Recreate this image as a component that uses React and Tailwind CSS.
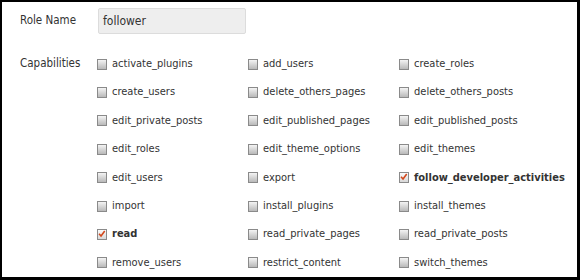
import React from "react";

const caps = [
  ["activate_plugins", false],
  ["add_users", false],
  ["create_roles", false],
  ["create_users", false],
  ["delete_others_pages", false],
  ["delete_others_posts", false],
  ["edit_private_posts", false],
  ["edit_published_pages", false],
  ["edit_published_posts", false],
  ["edit_roles", false],
  ["edit_theme_options", false],
  ["edit_themes", false],
  ["edit_users", false],
  ["export", false],
  ["follow_developer_activities", true],
  ["import", false],
  ["install_plugins", false],
  ["install_themes", false],
  ["read", true],
  ["read_private_pages", false],
  ["read_private_posts", false],
  ["remove_users", false],
  ["restrict_content", false],
  ["switch_themes", false],
];

function Box({ checked }) {
  return (
    <span
      className={`relative w-[10px] h-[11px] shrink-0 border border-[#8a8a8a] bg-gradient-to-b mr-[5px] ${
        checked ? "from-[#fbfbfb] to-[#d8d8d8]" : "from-[#f4f4f4] to-[#b9b9b9]"
      }`}
    >
      {checked && (
        <svg viewBox="0 0 10 10" className="absolute left-0 top-0 w-[8px] h-[8px]">
          <path d="M1.3 4.6 L3.8 7.4 L8.4 1.2" stroke="#d2481c" strokeWidth="2" fill="none" />
        </svg>
      )}
    </span>
  );
}

export default function App() {
  return (
    <div
      className="w-[580px] h-[280px] bg-white border-black border-l-2 border-t-2 border-r-[3px] border-b-[3px] text-[#333] text-[11.5px] overflow-hidden"
      style={{ fontFamily: '"DejaVu Sans Condensed", "DejaVu Sans", sans-serif', fontStretch: "condensed" }}
    >
      <div className="flex items-center pt-[6px]">
        <div className="w-[96px] pl-[18px]">Role Name</div>
        <div className="w-[148px] h-[26px] bg-[#eeeeee] border border-[#dcdcdc] rounded-[2px] flex items-center pl-[4px] text-[12px]">
          follower
        </div>
      </div>
      <div className="flex mt-[16px]">
        <div className="w-[95px] pl-[18px] h-[28px] flex items-center">Capabilities</div>
        <div className="grid grid-cols-[151px_151px_160px] text-[11px]">
          {caps.map(([name, on]) => (
            <div key={name} className="h-[28.4px] flex items-center">
              <Box checked={on} />
              <span className={on ? "font-bold" : ""}>{name}</span>
            </div>
          ))}
        </div>
      </div>
    </div>
  );
}
